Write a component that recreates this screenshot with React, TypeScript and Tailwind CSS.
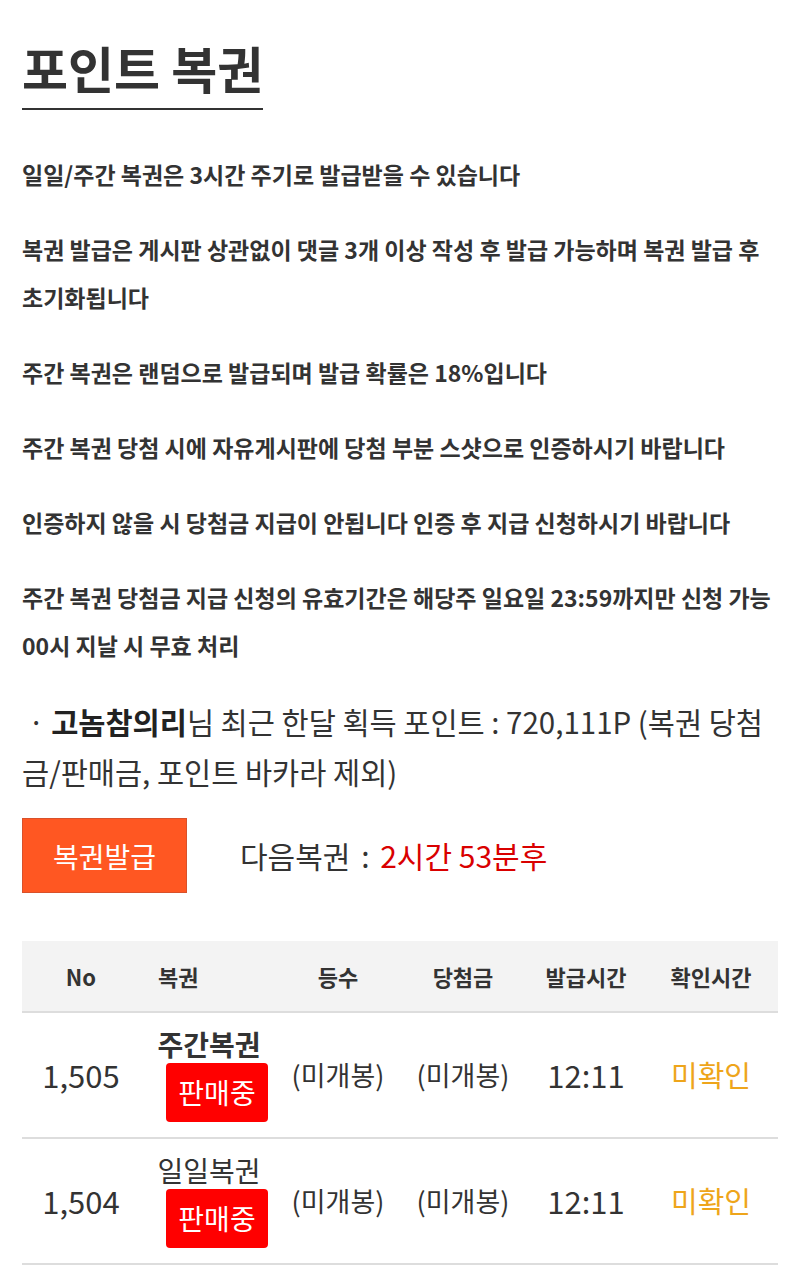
import React from 'react';

const notices: string[][] = [
  ['일일/주간 복권은 3시간 주기로 발급받을 수 있습니다'],
  ['복권 발급은 게시판 상관없이 댓글 3개 이상 작성 후 발급 가능하며 복권 발급 후', '초기화됩니다'],
  ['주간 복권은 랜덤으로 발급되며 발급 확률은 18%입니다'],
  ['주간 복권 당첨 시에 자유게시판에 당첨 부분 스샷으로 인증하시기 바랍니다'],
  ['인증하지 않을 시 당첨금 지급이 안됩니다 인증 후 지급 신청하시기 바랍니다'],
  ['주간 복권 당첨금 지급 신청의 유효기간은 해당주 일요일 23:59까지만 신청 가능', '00시 지날 시 무효 처리'],
];

const rows = [
  { no: '1,505', name: '주간복권', weekly: true, rank: '(미개봉)', prize: '(미개봉)', issued: '12:11', checked: '미확인' },
  { no: '1,504', name: '일일복권', weekly: false, rank: '(미개봉)', prize: '(미개봉)', issued: '12:11', checked: '미확인' },
];

const cols = 'grid grid-cols-[118px_138px_120px_130px_116px_134px]';

const App: React.FC = () => {
  return (
    <div className="min-h-screen bg-white px-[22px] pt-[39px] font-['Noto_Sans_CJK_KR','Noto_Sans',sans-serif] text-[#333]">
      <h1 className="inline-block border-b-2 border-[#333] pb-[13px] text-[50px] font-bold leading-[56px]">
        포인트 복권
      </h1>

      <div className="mt-[40px]">
        {notices.map((lines, i) => (
          <p key={i} className="mb-[27px] text-[23px] font-bold leading-[48px] whitespace-nowrap">
            {lines.map((l, j) => (
              <React.Fragment key={j}>
                {j > 0 && <br />}
                {l}
              </React.Fragment>
            ))}
          </p>
        ))}
      </div>

      <p className="mt-[21px] pl-[6px] text-[29.5px] leading-[50px] whitespace-nowrap">
        · <b className="font-bold text-[#222]">고놈참의리</b>님 최근 한달 획득 포인트 : 720,111P (복권 당첨
        <br />
        <span className="-ml-[6px]">금/판매금, 포인트 바카라 제외)</span>
      </p>

      <div className="mt-[22px] flex items-center">
        <button className="flex h-[75px] w-[165px] items-center justify-center border border-[#d9512a] bg-[#ff5722] text-[28px] text-white">
          복권발급
        </button>
        <div className="ml-[53px] text-[30px]">
          다음복권 <span className="mx-[4px]">:</span> <span className="text-[#d90000]">2시간 53분후</span>
        </div>
      </div>

      <div className="mt-[48px]">
        <div className={`${cols} h-[72px] items-center border-b-2 border-[#ddd] bg-[#f3f3f3] text-center text-[22px] font-bold`}>
          <div>No</div>
          <div className="pl-[18px] text-left">복권</div>
          <div>등수</div>
          <div>당첨금</div>
          <div>발급시간</div>
          <div>확인시간</div>
        </div>
        {rows.map((r) => (
          <div key={r.no} className={`${cols} h-[126px] items-center border-b-2 border-[#ddd] text-center`}>
            <div className="text-[31px]">{r.no}</div>
            <div className="flex flex-col items-center">
              <span className={`text-[28px] leading-[30px] ${r.weekly ? 'font-bold' : ''}`}>{r.name}</span>
              <span className="ml-[16px] mt-[4px] flex h-[59px] w-[102px] items-center justify-center rounded-[4px] bg-[#ff0000] text-[28px] text-white">
                판매중
              </span>
            </div>
            <div className="text-[27px]">{r.rank}</div>
            <div className="text-[27px]">{r.prize}</div>
            <div className="text-[31px]">{r.issued}</div>
            <div className="text-[29px] text-[#eea51b]">{r.checked}</div>
          </div>
        ))}
      </div>
    </div>
  );
};

export default App;
